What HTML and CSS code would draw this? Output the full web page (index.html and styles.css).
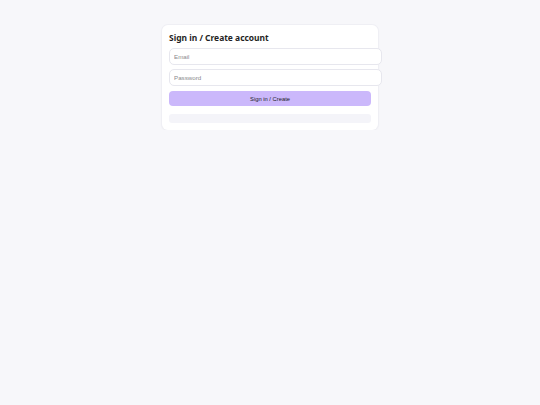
FILE: index.html
```html
<!DOCTYPE html>
<html>
<head>
<meta charset="utf-8">
<link rel="stylesheet" href="styles.css">
</head>
<body>
<div class="card">
  <h2 class="title">Sign in / Create account</h2>
  <form class="form">
    <input class="field" type="email" placeholder="Email">
    <input class="field" type="password" placeholder="Password">
    <button class="btn" type="button">Sign in / Create</button>
  </form>
  <div class="status"></div>
</div>
</body>
</html>
```
FILE: styles.css
```css
html, body {
  margin: 0;
  padding: 0;
}
body {
  background: #f7f7fa;
  font-family: "Noto Sans", "Open Sans", sans-serif;
  color: #1f1f24;
}
.card {
  box-sizing: border-box;
  width: 216px;
  margin: 25px auto 0;
  padding: 7px;
  background: #ffffff;
  border-radius: 6px;
  box-shadow: 0 0 0 1px #efeff4, 0 1px 3px rgba(20, 20, 40, 0.04);
}
.title {
  margin: 0 0 5px;
  font-size: 8.45px;
  line-height: 11px;
  font-weight: 700;
}
.form {
  display: flex;
  flex-direction: column;
  gap: 4px;
}
.field {
  display: block;
  width: 100%;
  height: 15px;
  padding: 0 5px 0 4px;
  margin: 0;
  border: 1px solid #e7e7ee;
  border-radius: 5px;
  background: #fff;
  font-family: "Liberation Sans", Arial, sans-serif;
  font-size: 6.2px;
  color: #333;
  outline: none;
}
.field::placeholder {
  color: #8a8a8d;
}
.btn {
  margin-top: 1px;
  height: 15px;
  padding: 0;
  border: none;
  border-radius: 4px;
  background: #cbb8fb;
  font-family: "Liberation Sans", Arial, sans-serif;
  font-size: 5.8px;
  color: #18181c;
}
.status {
  margin-top: 8px;
  height: 9px;
  border-radius: 3px;
  background: #f4f4f9;
}
```
